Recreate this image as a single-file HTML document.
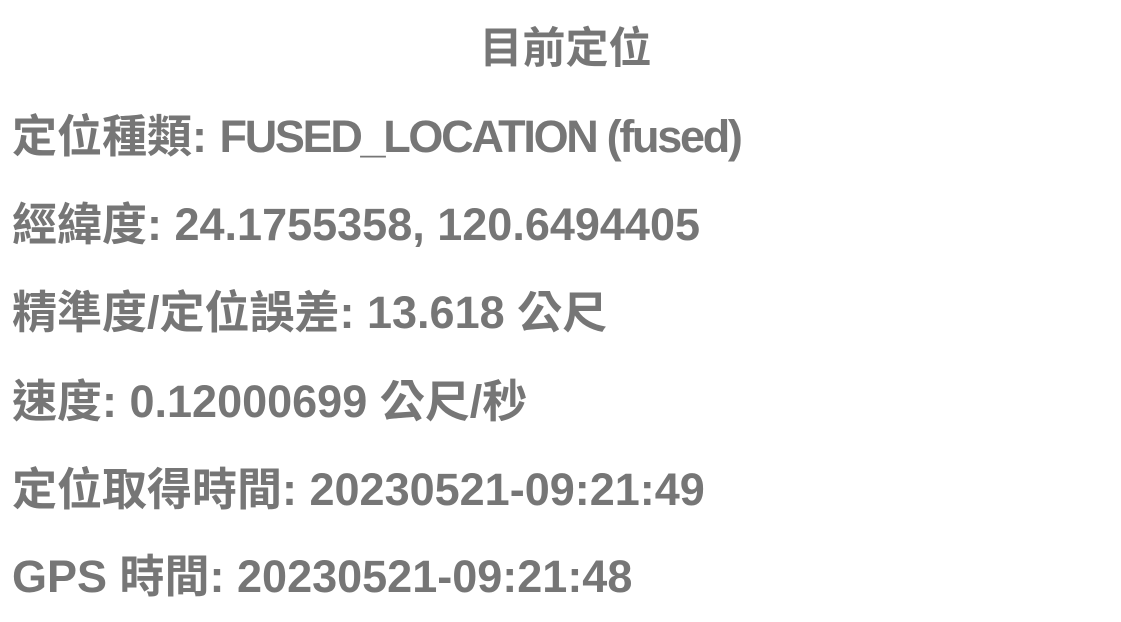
<!DOCTYPE html>
<html><head><meta charset="utf-8"><style>
html,body{margin:0;padding:0;background:#fff;width:1121px;height:622px;overflow:hidden}
div{position:absolute;left:12px;font-family:"Liberation Sans","Noto Sans CJK TC",sans-serif;font-size:45px;font-weight:bold;color:#767676;line-height:50px;white-space:nowrap}
.t{left:0;width:1121px;text-align:center;padding-left:10px;box-sizing:border-box;font-size:43px}
.n{letter-spacing:-2.3px}
</style></head><body>
<div class="t" style="top:24px">目前定位</div>
<div style="top:112px">定位種類: <span class="n">FUSED_LOCATION (fused)</span></div>
<div style="top:200px">經緯度: 24.1755358, 120.6494405</div>
<div style="top:288px">精準度/定位誤差: 13.618 公尺</div>
<div style="top:377px">速度: 0.12000699 公尺/秒</div>
<div style="top:465px">定位取得時間: 20230521-09:21:49</div>
<div style="top:552px">GPS 時間: 20230521-09:21:48</div>
</body></html>
